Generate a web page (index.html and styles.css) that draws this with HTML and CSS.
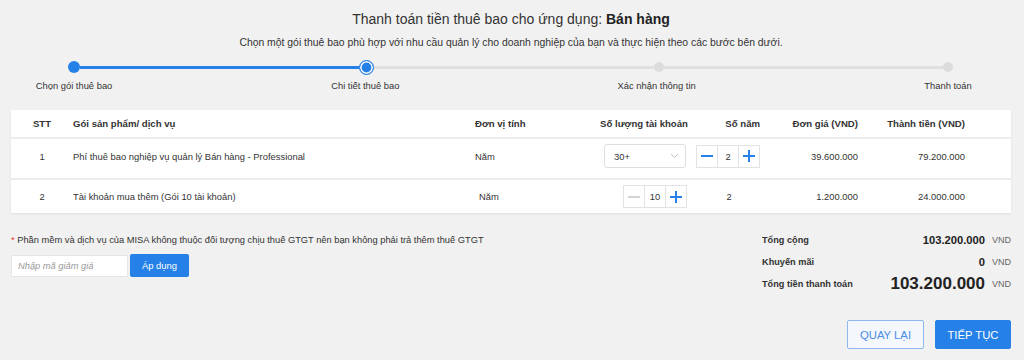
FILE: index.html
```html
<!DOCTYPE html>
<html lang="vi">
<head>
<meta charset="utf-8">
<title>Thanh toán</title>
<link rel="stylesheet" href="styles.css">
</head>
<body>
<div class="page">
  <header class="head">
    <h1 class="title">Thanh toán tiền thuê bao cho ứng dụng: <b>Bán hàng</b></h1>
    <p class="subtitle">Chọn một gói thuê bao phù hợp với nhu cầu quản lý cho doanh nghiệp của bạn và thực hiện theo các bước bên dưới.</p>
  </header>

  <div class="stepper">
    <div class="track">
      <span class="dot done"></span>
      <span class="seg done"></span>
      <span class="dot active"></span>
      <span class="seg"></span>
      <span class="dot"></span>
      <span class="seg"></span>
      <span class="dot"></span>
    </div>
    <div class="labels">
      <span class="lbl"><span>Chọn gói thuê bao</span></span>
      <span class="lbl"><span>Chi tiết thuê bao</span></span>
      <span class="lbl"><span>Xác nhận thông tin</span></span>
      <span class="lbl"><span>Thanh toán</span></span>
    </div>
  </div>

  <div class="card">
    <div class="row head-row">
      <div class="c center">STT</div>
      <div class="c">Gói sản phẩm/ dịch vụ</div>
      <div class="c">Đơn vị tính</div>
      <div class="c center">Số lượng tài khoản</div>
      <div class="c end">Số năm</div>
      <div class="c end">Đơn giá (VND)</div>
      <div class="c end">Thành tiền (VND)</div>
      <div class="c"></div>
    </div>
    <div class="row r1">
      <div class="c center">1</div>
      <div class="c">Phí thuê bao nghiệp vụ quản lý Bán hàng - Professional</div>
      <div class="c">Năm</div>
      <div class="c end pr">
        <div class="select"><span>30+</span>
          <svg width="9" height="6" viewBox="0 0 9 6"><path d="M1 1l3.5 3.5L8 1" fill="none" stroke="#c4c4c4" stroke-width="1"/></svg>
        </div>
      </div>
      <div class="c end">
        <div class="num">
          <span class="nb"><svg width="12" height="12" viewBox="0 0 12 12"><path d="M0 6h12" stroke="#2581e8" stroke-width="2"/></svg></span>
          <span class="nv">2</span>
          <span class="nb"><svg width="12" height="12" viewBox="0 0 12 12"><path d="M0 6h12M6 0v12" stroke="#2581e8" stroke-width="2"/></svg></span>
        </div>
      </div>
      <div class="c end">39.600.000</div>
      <div class="c end">79.200.000</div>
      <div class="c"></div>
    </div>
    <div class="row r2">
      <div class="c center">2</div>
      <div class="c">Tài khoản mua thêm (Gói 10 tài khoản)</div>
      <div class="c shift">Năm</div>
      <div class="c end pr">
        <div class="num">
          <span class="nb"><svg width="12" height="12" viewBox="0 0 12 12"><path d="M0 6h12" stroke="#d4d4d4" stroke-width="2"/></svg></span>
          <span class="nv">10</span>
          <span class="nb"><svg width="12" height="12" viewBox="0 0 12 12"><path d="M0 6h12M6 0v12" stroke="#2581e8" stroke-width="2"/></svg></span>
        </div>
      </div>
      <div class="c center">2</div>
      <div class="c end">1.200.000</div>
      <div class="c end">24.000.000</div>
      <div class="c"></div>
    </div>
  </div>

  <div class="bottom">
    <div class="left">
      <p class="note"><span class="req">*</span> Phần mềm và dịch vụ của MISA không thuộc đối tượng chịu thuế GTGT nên bạn không phải trả thêm thuế GTGT</p>
      <div class="coupon">
        <input class="code" type="text" placeholder="Nhập mã giảm giá">
        <button class="apply">Áp dụng</button>
      </div>
    </div>
    <div class="summary">
      <div class="srow"><span class="sl">Tổng cộng</span><span class="sv">103.200.000</span><span class="cur">VND</span></div>
      <div class="srow"><span class="sl">Khuyến mãi</span><span class="sv">0</span><span class="cur">VND</span></div>
      <div class="srow"><span class="sl">Tổng tiền thanh toán</span><span class="sv big">103.200.000</span><span class="cur">VND</span></div>
    </div>
  </div>

  <div class="actions">
    <button class="btn ghost">QUAY LẠI</button>
    <button class="btn primary">TIẾP TỤC</button>
  </div>
</div>
</body>
</html>
```

FILE: styles.css
```css
* { box-sizing: border-box; }
html, body { margin: 0; padding: 0; }
body {
  background: #f1f1f1;
  font-family: "Liberation Sans", Arial, sans-serif;
  color: #333;
  width: 1024px;
  height: 360px;
  overflow: hidden;
}
.page { padding: 0 13px 0 11px; }

.head { text-align: center; padding-top: 9px; }
.title {
  margin: 0;
  font-size: 14px;
  font-weight: normal;
  line-height: 20px;
  color: #333;
}
.title b { font-weight: bold; color: #222; }
.subtitle {
  margin: 6px 0 0;
  font-size: 10.4px;
  line-height: 16px;
  color: #333;
}

.stepper { margin-top: 9px; }
.track {
  display: flex;
  align-items: center;
  height: 14px;
  margin: 0 58px 0 57px;
}
.dot {
  flex: none;
  width: 10px;
  height: 10px;
  border-radius: 50%;
  background: #dcdcdc;
}
.dot.done { width: 12px; height: 12px; background: #2581e8; }
.dot.active {
  width: 15px;
  height: 15px;
  background: #2581e8;
  border: 1.5px solid #2581e8;
  box-shadow: inset 0 0 0 1.6px #fff;
}
.seg { flex: 1; height: 3px; background: #e0e0e0; }
.seg.done { background: #2581e8; }
.labels {
  display: flex;
  justify-content: space-between;
  margin: 5px 63px 0 63px;
}
.lbl {
  width: 0;
  display: flex;
  justify-content: center;
  font-size: 9.4px;
  line-height: 14px;
  color: #333;
  white-space: nowrap;
}

.card {
  margin-top: 17px;
  width: 1000px;
  background: #ececec;
  box-shadow: 0 1px 2px rgba(0,0,0,0.08);
  display: flex;
  flex-direction: column;
  gap: 2px;
}
.row {
  display: grid;
  grid-template-columns: 62px 402px 115px 108px 62px 98px 107px 46px;
  align-items: center;
  background: #fff;
  font-size: 9.4px;
  color: #333;
}
.head-row {
  height: 28px;
  font-weight: bold;
  font-size: 9.6px;
  color: #333;
  margin-bottom: -1px;
  border-bottom: 1px solid #ececec;
}
.r1 { height: 39px; padding-bottom: 5px; }
.r2 { height: 33px; }
.c { display: flex; align-items: center; white-space: nowrap; }
.c.center { justify-content: center; }
.c.end { justify-content: flex-end; }
.c.pr { padding-right: 11px; }
.c.shift { padding-left: 4px; }

.select {
  width: 82px;
  height: 24px;
  border: 1px solid #dedede;
  border-radius: 3px;
  display: flex;
  align-items: center;
  justify-content: space-between;
  padding: 0 6px 0 9px;
  margin-right: 1px;
  font-size: 9.4px;
  color: #333;
}
.num {
  display: flex;
  height: 23px;
  border: 1px solid #e3e3e3;
}
.nb {
  width: 20px;
  display: flex;
  align-items: center;
  justify-content: center;
}
.nv {
  width: 22px;
  display: flex;
  align-items: center;
  justify-content: center;
  border-left: 1px solid #e3e3e3;
  border-right: 1px solid #e3e3e3;
  font-size: 9.4px;
}

.bottom {
  display: flex;
  justify-content: space-between;
  margin-top: 16px;
}
.note {
  margin: 0;
  font-size: 9.3px;
  line-height: 22px;
  color: #333;
}
.req { color: #e53935; }
.coupon { display: flex; align-items: flex-end; gap: 2px; margin-top: 3px; }
.code {
  width: 117px;
  height: 22px;
  border: 1px solid #e6e6e6;
  background: #fff;
  padding: 0 6px;
  font: italic 9.3px "Liberation Sans", Arial, sans-serif;
  color: #333;
  outline: none;
}
.code::placeholder { color: #999; }
.apply {
  width: 59px;
  height: 23px;
  border: none;
  border-radius: 2px;
  background: #2581e8;
  color: #fff;
  font: 9.4px "Liberation Sans", Arial, sans-serif;
  padding: 0;
}

.summary { width: 249px; }
.srow {
  display: flex;
  align-items: center;
  height: 22px;
}
.sl { flex: 1; font-size: 9.2px; font-weight: bold; color: #333; }
.sv { font-size: 11.2px; font-weight: bold; color: #222; }
.sv.big { font-size: 17px; }
.cur { width: 26px; text-align: right; font-size: 9px; color: #666; }

.actions {
  display: flex;
  justify-content: flex-end;
  gap: 11px;
  margin-top: 25px;
}
.btn {
  height: 29px;
  border-radius: 2px;
  font: 11.3px "Liberation Sans", Arial, sans-serif;
  padding: 0;
}
.ghost {
  width: 77px;
  background: #f4f7fb;
  border: 1px solid #8db9ef;
  color: #4a8de6;
}
.primary {
  width: 76px;
  background: #2581e8;
  border: 1px solid #2581e8;
  color: #fff;
}
```
